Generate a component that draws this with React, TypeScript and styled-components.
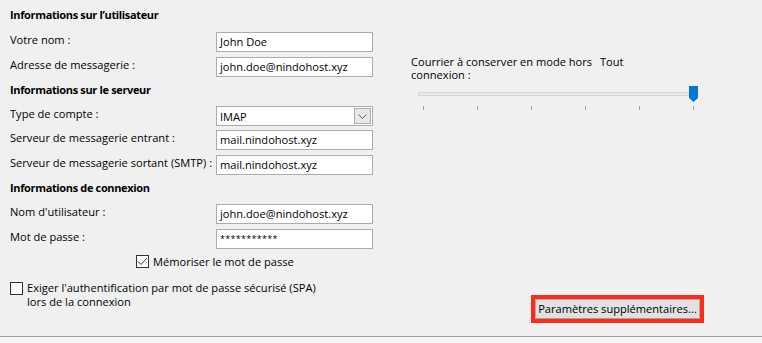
import React from "react";
import styled, { createGlobalStyle } from "styled-components";

const Global = createGlobalStyle`
  html, body { margin: 0; padding: 0; background: #f0f0f0; }
  body { font-family: "Open Sans", "Noto Sans", sans-serif; font-size: 11.1px; color: #000; }
`;

const Page = styled.div`
  width: 762px;
  height: 343px;
  box-sizing: border-box;
  display: flex;
  flex-direction: column;
  background: #f0f0f0;
`;

const Main = styled.div`
  flex: 1;
  display: flex;
  border-bottom: 1px solid #a0a0a0;
`;

const Footer = styled.div`
  height: 6px;
  background: #f4f4f4;
`;

const Left = styled.div`
  width: 363px;
  flex: none;
  padding: 7px 0 0 10px;
  display: flex;
  flex-direction: column;
`;

const Heading = styled.div<{ $mt: number; $mb: number }>`
  font-weight: 700;
  font-size: 11px;
  letter-spacing: -0.35px;
  line-height: 16px;
  height: 16px;
  margin-top: ${(p) => p.$mt}px;
  margin-bottom: ${(p) => p.$mb}px;
  white-space: nowrap;
`;

const Row = styled.div<{ $mb?: number }>`
  display: grid;
  grid-template-columns: 206px 157px;
  height: 20px;
  margin-bottom: ${(p) => p.$mb ?? 5}px;
`;

const Label = styled.span`
  line-height: 16px;
  white-space: nowrap;
`;

const Input = styled.div`
  box-sizing: border-box;
  height: 20px;
  border: 1px solid #acacac;
  background: #fff;
  padding: 0 3px;
  line-height: 18px;
  white-space: nowrap;
  overflow: hidden;
`;

const Stars = styled(Input)`
  font-size: 9px;
  letter-spacing: 0.3px;
`;

const Select = styled.div`
  box-sizing: border-box;
  height: 20px;
  border: 1px solid #acacac;
  background: #fff;
  padding: 0 0 0 3px;
  display: flex;
  align-items: center;
  justify-content: space-between;
`;

const SelectButton = styled.div`
  box-sizing: border-box;
  width: 17px;
  height: 16px;
  margin-right: 1px;
  background: #e8e8e8;
  border: 1px solid #adadad;
  display: flex;
  align-items: center;
  justify-content: center;
`;

const CheckRow = styled.label<{ $indent: number; $mt: number; $lh: number }>`
  display: flex;
  align-items: flex-start;
  gap: 4px;
  padding-left: ${(p) => p.$indent}px;
  margin-top: ${(p) => p.$mt}px;
  line-height: ${(p) => p.$lh}px;
`;

const Box = styled.span<{ $offset?: number }>`
  box-sizing: border-box;
  width: 13px;
  height: 13px;
  flex: none;
  margin-top: ${(p) => p.$offset ?? 0}px;
  border: 1px solid #333;
  background: #fff;
  display: flex;
  align-items: center;
  justify-content: center;
`;

const Right = styled.div`
  flex: 1;
  display: flex;
  flex-direction: column;
  padding: 55px 0 13px 38px;
`;

const SliderLabels = styled.div`
  display: flex;
  line-height: 13px;
`;

const SliderLabel = styled.div`
  width: 189px;
  flex: none;
`;

const Slider = styled.div`
  position: relative;
  margin: 8px 0 0 7px;
  width: 280px;
  height: 22px;
`;

const Track = styled.div`
  position: absolute;
  left: 0;
  top: 3px;
  width: 276px;
  height: 4px;
  box-sizing: border-box;
  background: #e7eae7;
  border: 1px solid #d6d6d6;
`;

const Tick = styled.div`
  position: absolute;
  top: 17px;
  width: 1px;
  height: 4px;
  background: #a0a0a0;
`;

const Thumb = styled.svg`
  position: absolute;
  left: 271px;
  top: -3px;
`;

const Highlight = styled.div`
  margin-top: auto;
  margin-left: 120px;
  align-self: flex-start;
  border: 4px solid #ff2a1a;
`;

const Button = styled.button`
  display: block;
  box-sizing: border-box;
  width: 165px;
  height: 20px;
  background: #e1e1e1;
  border: 1px solid #adadad;
  border-bottom-color: #a0a0a0;
  font-family: inherit;
  font-size: 11.1px;
  color: #000;
  padding: 0 0 1px;
  line-height: 16px;
  white-space: nowrap;
`;

const ticks = [0, 54, 108, 162, 216, 270];

export default function App() {
  return (
    <Page>
      <Global />
      <Main>
        <Left>
          <Heading $mt={0} $mb={9}>Informations sur l’utilisateur</Heading>
          <Row>
            <Label>Votre nom :</Label>
            <Input>John Doe</Input>
          </Row>
          <Row $mb={0}>
            <Label>Adresse de messagerie :</Label>
            <Input>john.doe@nindohost.xyz</Input>
          </Row>
          <Heading $mt={5} $mb={8}>Informations sur le serveur</Heading>
          <Row $mb={4}>
            <Label>Type de compte :</Label>
            <Select>
              IMAP
              <SelectButton>
                <svg width="9" height="5" viewBox="0 0 9 5">
                  <path d="M0.5 0.5 L4.5 4.5 L8.5 0.5" fill="none" stroke="#606060" strokeWidth="1" />
                </svg>
              </SelectButton>
            </Select>
          </Row>
          <Row $mb={5}>
            <Label>Serveur de messagerie entrant :</Label>
            <Input>mail.nindohost.xyz</Input>
          </Row>
          <Row $mb={0}>
            <Label>Serveur de messagerie sortant (SMTP) :</Label>
            <Input>mail.nindohost.xyz</Input>
          </Row>
          <Heading $mt={5} $mb={8}>Informations de connexion</Heading>
          <Row>
            <Label>Nom d'utilisateur :</Label>
            <Input>john.doe@nindohost.xyz</Input>
          </Row>
          <Row $mb={0}>
            <Label>Mot de passe :</Label>
            <Stars>***********</Stars>
          </Row>
          <CheckRow $indent={126} $mt={6} $lh={13}>
            <Box>
              <svg width="11" height="11" viewBox="0 0 11 11">
                <path d="M1 5.5 L4 8.5 L10 2" fill="none" stroke="#333" strokeWidth="1" />
              </svg>
            </Box>
            <span>Mémoriser le mot de passe</span>
          </CheckRow>
          <CheckRow $indent={0} $mt={13} $lh={14}>
            <Box $offset={1} />
            <span>
              Exiger l'authentification par mot de passe sécurisé (SPA)
              <br />
              lors de la connexion
            </span>
          </CheckRow>
        </Left>
        <Right>
          <SliderLabels>
            <SliderLabel>Courrier à conserver en mode hors connexion :</SliderLabel>
            <div>Tout</div>
          </SliderLabels>
          <Slider>
            <Track />
            {ticks.map((t) => (
              <Tick key={t} style={{ left: t + 5 }} />
            ))}
            <Thumb width="9" height="16" viewBox="0 0 9 16">
              <path d="M0 0 H9 V12 L4.5 16 L0 12 Z" fill="#0078d7" />
            </Thumb>
          </Slider>
          <Highlight>
            <Button>Paramètres supplémentaires...</Button>
          </Highlight>
        </Right>
      </Main>
      <Footer />
    </Page>
  );
}
